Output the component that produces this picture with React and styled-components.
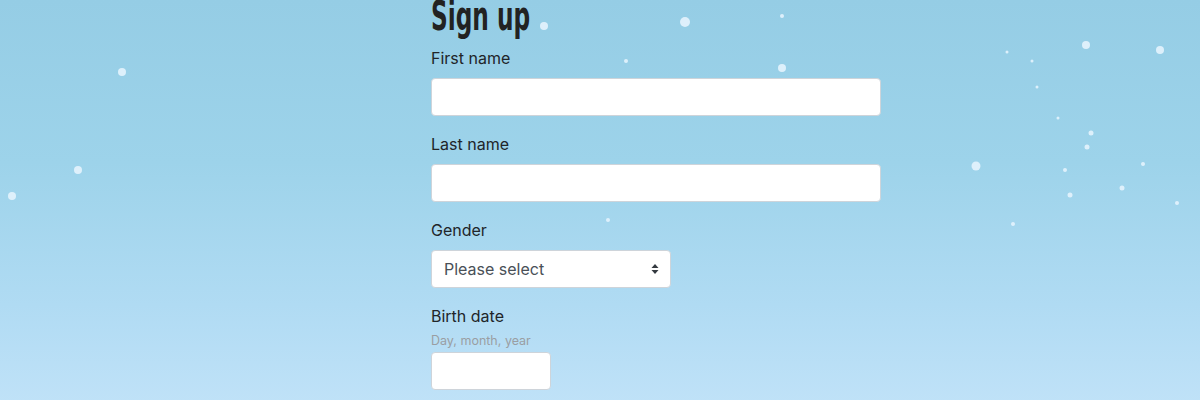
import React from "react";
import styled, { createGlobalStyle } from "styled-components";

const GlobalStyle = createGlobalStyle`
  html, body {
    margin: 0;
    padding: 0;
  }
  body {
    font-family: "Inter", "Roboto", "Liberation Sans", sans-serif;
    color: #212529;
  }
`;

// background flakes: x, y, radius
const flakes = [
  [122, 72, 4], [78, 170, 4], [12, 196, 4],
  [544, 26, 4], [685, 22, 5], [626, 61, 2], [782, 16, 2], [782, 68, 4],
  [608, 220, 2],
  [1086, 45, 4], [1160, 50, 4], [1007, 52, 1.5], [1032, 61, 1.5],
  [1037, 87, 1.5], [1058, 118, 1.5], [1091, 133, 2.5], [1087, 147, 2.5],
  [976, 166, 4.5], [1143, 164, 2], [1065, 170, 2], [1122, 188, 2.5],
  [1070, 195, 2.5], [1177, 203, 2], [1013, 224, 2],
];

const Page = styled.div`
  position: relative;
  min-height: 100vh;
  overflow: hidden;
  background: linear-gradient(180deg, #95cde5 0%, #9dd3ea 40%, #b0dbf3 75%, #c0e2f8 100%);
  display: grid;
  grid-template-columns: 431px 450px 1fr;
`;

const Snow = styled.svg`
  position: absolute;
  inset: 0;
  width: 100%;
  height: 100%;
  pointer-events: none;
`;

const Form = styled.form`
  grid-column: 2;
  position: relative;
  margin-top: -6px;
`;

const Title = styled.h1`
  margin: 0 0 8px;
  font-family: "DejaVu Sans Condensed", "DejaVu Sans", sans-serif;
  font-stretch: condensed;
  font-weight: 700;
  font-size: 41px;
  line-height: 44px;
  color: #222;
  transform: scaleX(0.63);
  transform-origin: left center;
  white-space: nowrap;
`;

const Group = styled.div`
  margin-bottom: 16px;
`;

const Label = styled.label`
  display: block;
  font-size: 16px;
  line-height: 24px;
  margin-bottom: ${(p) => (p.$tight ? "4px" : "8px")};
`;

const Hint = styled.small`
  display: block;
  font-size: 12.5px;
  line-height: 18px;
  color: #9a9ea3;
  margin-bottom: 2px;
`;

const Input = styled.input`
  display: block;
  box-sizing: border-box;
  width: ${(p) => p.$width || "100%"};
  height: 38px;
  padding: 6px 12px;
  font: inherit;
  font-size: 16px;
  color: #495057;
  background: #fff;
  border: 1px solid #ced4da;
  border-radius: 4px;
  outline: none;
`;

const SelectWrap = styled.div`
  position: relative;
  width: 240px;
`;

const Select = styled.select`
  display: block;
  box-sizing: border-box;
  width: 100%;
  height: 38px;
  padding: 6px 32px 6px 12px;
  font: inherit;
  font-size: 16px;
  color: #495057;
  background: #fff;
  border: 1px solid #ced4da;
  border-radius: 4px;
  appearance: none;
  outline: none;
`;

const Caret = styled.svg`
  position: absolute;
  right: 12px;
  top: 50%;
  transform: translateY(-50%);
  pointer-events: none;
`;

export default function App() {
  return (
    <>
      <GlobalStyle />
      <Page>
        <Snow>
          {flakes.map(([x, y, r], i) => (
            <circle key={i} cx={x} cy={y} r={r} fill="#e4f3fd" opacity="0.9" />
          ))}
        </Snow>
        <Form onSubmit={(e) => e.preventDefault()}>
          <Title>Sign up</Title>
          <Group>
            <Label htmlFor="first">First name</Label>
            <Input id="first" type="text" />
          </Group>
          <Group>
            <Label htmlFor="last">Last name</Label>
            <Input id="last" type="text" />
          </Group>
          <Group>
            <Label htmlFor="gender">Gender</Label>
            <SelectWrap>
              <Select id="gender" defaultValue="">
                <option value="">Please select</option>
                <option value="f">Female</option>
                <option value="m">Male</option>
              </Select>
              <Caret width="8" height="12" viewBox="0 0 8 12">
                <path d="M4 1 L7.5 5 H0.5 Z M4 11 L0.5 7 H7.5 Z" fill="#343a40" />
              </Caret>
            </SelectWrap>
          </Group>
          <Group>
            <Label htmlFor="birth" $tight>Birth date</Label>
            <Hint>Day, month, year</Hint>
            <Input id="birth" type="text" $width="120px" />
          </Group>
        </Form>
      </Page>
    </>
  );
}
